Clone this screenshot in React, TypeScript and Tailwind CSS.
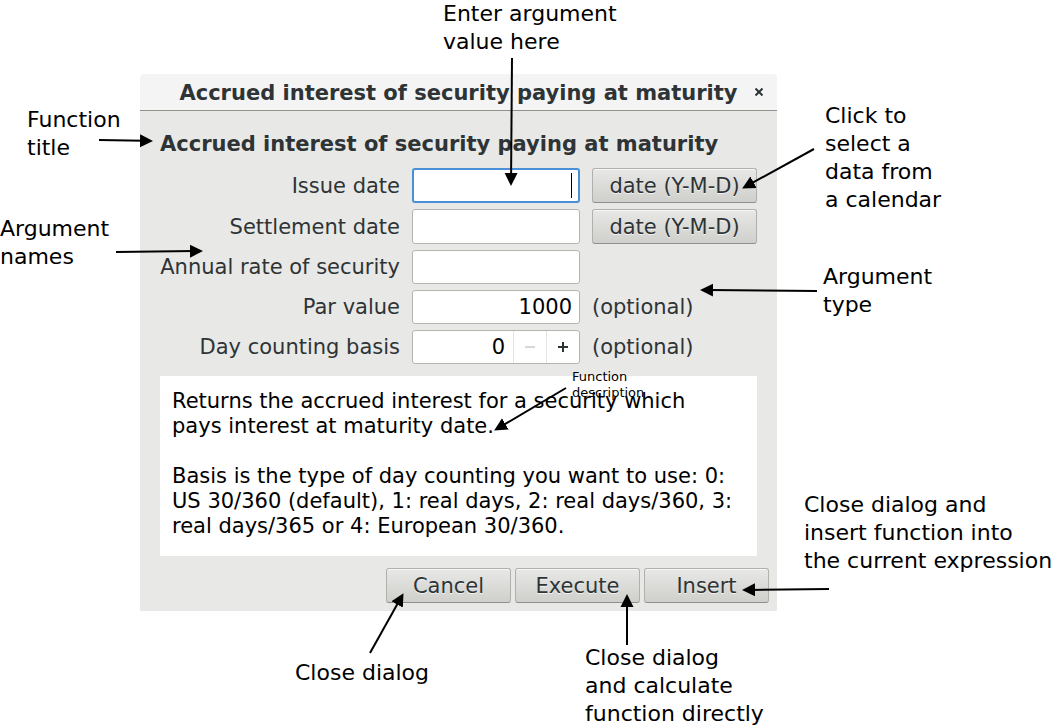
import type { ReactNode } from "react";

type Point = [number, number];

const arrows: { from: Point; to: Point }[] = [
  { from: [512, 58], to: [511, 185] },
  { from: [99, 140], to: [152, 141] },
  { from: [116, 252], to: [202, 251] },
  { from: [814, 149], to: [743, 188] },
  { from: [817, 291], to: [701, 290] },
  { from: [566, 388], to: [495, 430] },
  { from: [829, 589], to: [743, 590] },
  { from: [370, 653], to: [403, 594] },
  { from: [627, 645], to: [627, 595] },
];

function Arrows() {
  return (
    <svg
      aria-hidden="true"
      className="pointer-events-none absolute left-0 top-0"
      width="1058"
      height="726"
      viewBox="0 0 1058 726"
    >
      <defs>
        <marker
          id="head"
          markerUnits="userSpaceOnUse"
          markerWidth="14"
          markerHeight="14"
          refX="12"
          refY="7"
          orient="auto"
        >
          <path d="M0 0.5 L13 7 L0 13.5 Z" fill="black" />
        </marker>
      </defs>
      {arrows.map(({ from, to }) => {
        const length = Math.hypot(to[0] - from[0], to[1] - from[1]);
        const t = (length - 8) / length;
        const neck = [from[0] + (to[0] - from[0]) * t, from[1] + (to[1] - from[1]) * t];
        return (
          <g key={`${to[0]}-${to[1]}`}>
            <path d={`M${from[0]} ${from[1]} L${neck[0]} ${neck[1]}`} stroke="black" strokeWidth="2" />
            <path d={`M${from[0]} ${from[1]} L${to[0]} ${to[1]}`} stroke="none" fill="none" markerEnd="url(#head)" />
          </g>
        );
      })}
    </svg>
  );
}

function Note({ place, children }: { place: string; children: ReactNode }) {
  return <p className={`absolute whitespace-pre text-[22px] leading-[28px] text-black ${place}`}>{children}</p>;
}

function Button({ size, children }: { size: string; children: ReactNode }) {
  return (
    <button
      type="button"
      className={`h-[35px] rounded-[3px] border border-[#b0b0ad] border-b-[#8f8f8c] bg-linear-to-b from-[#e8e8e6] to-[#cfcfcc] pt-px leading-[25px] shadow-[inset_0_1px_0_#f8f8f7] [text-shadow:0_1px_#f3f3f2] ${size}`}
    >
      {children}
    </button>
  );
}

const label = "pt-px text-right";
const field =
  "w-[168px] rounded-[3px] border border-[#b4b4b1] bg-white px-[7px] text-right text-black outline-none";

export default function App() {
  return (
    <main className="relative min-h-[726px] overflow-hidden bg-white pl-[140px] pt-[74px] font-['DejaVu_Sans',sans-serif] text-[21px] leading-[25px] text-[#2e3436]">
      <section aria-label="Accrued interest of security paying at maturity" className="w-fit rounded-t-[5px] bg-[#e8e8e6]">
        <header className="relative flex h-[37px] items-center justify-center rounded-t-[5px] border-b border-[#91918c] bg-[#f4f4f4]">
          <h1 className="pt-[2px] font-bold">Accrued interest of security paying at maturity</h1>
          <button type="button" aria-label="Close" className="absolute right-3 flex size-3 items-center justify-center">
            <svg width="8" height="8" viewBox="0 0 8 8" stroke="#2e3436" strokeWidth="2">
              <path d="M0.5 0.5 L7.5 7.5 M7.5 0.5 L0.5 7.5" />
            </svg>
          </button>
        </header>

        <form className="flex flex-col gap-3 px-5 pt-5" onSubmit={(e) => e.preventDefault()}>
          <h2 className="h-[25px] font-bold leading-[27px]">Accrued interest of security paying at maturity</h2>

          <div className="grid grid-cols-[240px_168px_165px] items-center gap-x-3 gap-y-[6px]">
            <label htmlFor="issue" className={label}>Issue date</label>
            <div className="flex h-[35px] w-[168px] items-center rounded-[3px] border-2 border-[#4a90d9] bg-white pr-[6px]">
              <input id="issue" className="min-w-0 flex-1 bg-transparent text-right text-black outline-none" />
              <span aria-hidden="true" className="h-[25px] w-px bg-black" />
            </div>
            <Button size="w-full">date (Y-M-D)</Button>

            <label htmlFor="settlement" className={label}>Settlement date</label>
            <input id="settlement" className={`${field} h-[35px]`} />
            <Button size="w-full">date (Y-M-D)</Button>

            <label htmlFor="rate" className={`${label} whitespace-nowrap`}>Annual rate of security</label>
            <input id="rate" className={`${field} h-[34px]`} />
            <span />

            <label htmlFor="par" className={label}>Par value</label>
            <input id="par" defaultValue="1000" className={`${field} h-[34px]`} />
            <span>(optional)</span>

            <label htmlFor="basis" className={label}>Day counting basis</label>
            <div className="flex h-[34px] w-[168px] overflow-hidden rounded-[3px] border border-[#b4b4b1] bg-white">
              <input id="basis" defaultValue="0" className="min-w-0 flex-1 pr-2 text-right text-black outline-none" />
              <button type="button" aria-label="Decrease" disabled className="flex w-[33px] items-center justify-center border-l border-[#e4e4e2]">
                <svg width="10" height="10" viewBox="0 0 10 10" stroke="#d8d8d6" strokeWidth="2">
                  <path d="M0 5 H10" />
                </svg>
              </button>
              <button type="button" aria-label="Increase" className="flex w-[33px] items-center justify-center border-l border-[#e4e4e2]">
                <svg width="10" height="10" viewBox="0 0 10 10" stroke="#2e3436" strokeWidth="2">
                  <path d="M0 5 H10 M5 0 V10" />
                </svg>
              </button>
            </div>
            <span>(optional)</span>
          </div>

          <div className="flex h-[180px] w-[597px] flex-col gap-[25px] bg-white px-3 pt-[13px] text-black">
            <p>
              Returns the accrued interest for a security which
              <br />
              pays interest at maturity date.
            </p>
            <p>
              Basis is the type of day counting you want to use: 0: US 30/360 (default), 1: real days, 2: real
              days/360, 3: real days/365 or 4: European 30/360.
            </p>
          </div>
        </form>

        <footer className="flex justify-end gap-1 px-2 pb-2 pt-3">
          <Button size="w-[125px]">Cancel</Button>
          <Button size="w-[125px]">Execute</Button>
          <Button size="w-[125px]">Insert</Button>
        </footer>
      </section>

      <Note place="left-[443px] top-0">{"Enter argument\nvalue here"}</Note>
      <Note place="left-[27px] top-[106px]">{"Function\ntitle"}</Note>
      <Note place="left-0 top-[215px]">{"Argument\nnames"}</Note>
      <Note place="left-[825px] top-[102px]">{"Click to\nselect a\ndata from\na calendar"}</Note>
      <Note place="left-[823px] top-[263px]">{"Argument\ntype"}</Note>
      <Note place="left-[804px] top-[491px]">{"Close dialog and\ninsert function into\nthe current expression"}</Note>
      <Note place="left-[295px] top-[659px]">{"Close dialog"}</Note>
      <Note place="left-[585px] top-[644px]">{"Close dialog\nand calculate\nfunction directly"}</Note>
      <p className="absolute left-[572px] top-[369px] whitespace-pre text-[13px] leading-[16px] text-black">
        {"Function\ndescription"}
      </p>
      <Arrows />
    </main>
  );
}
